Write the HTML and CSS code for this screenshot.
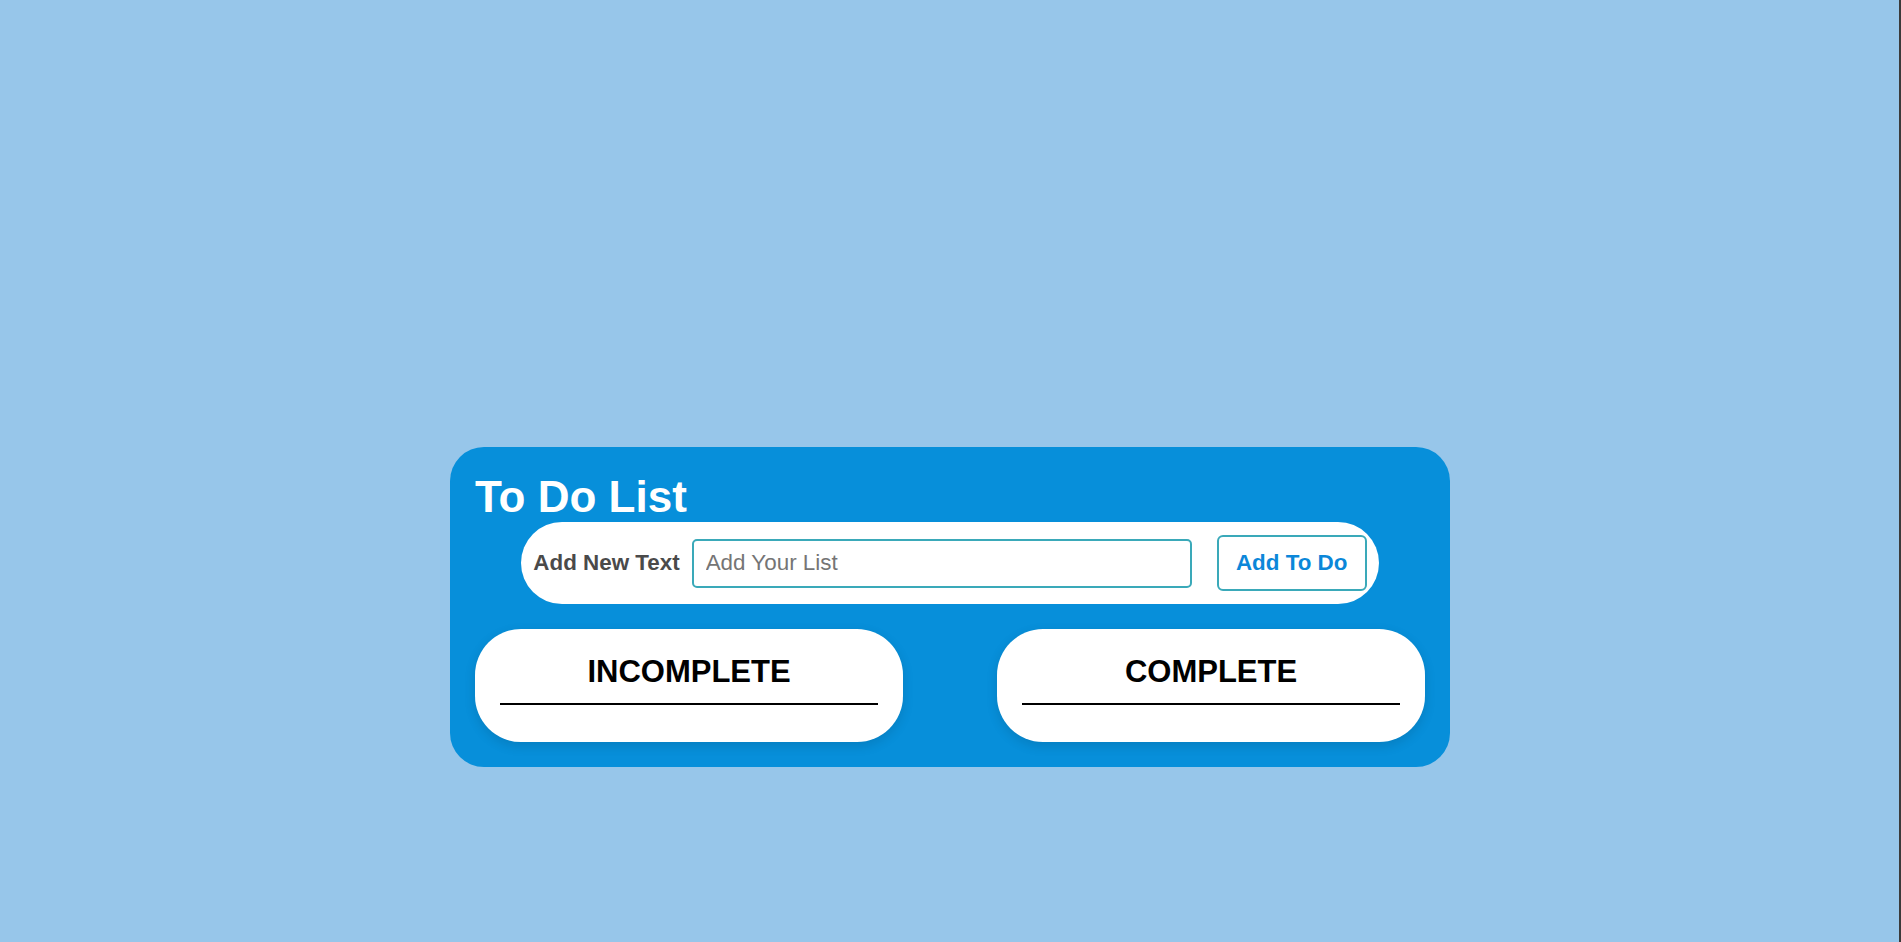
FILE: index.html
```html
<!DOCTYPE html>
<html lang="en">
<head>
<meta charset="utf-8">
<title>To Do List</title>
<link rel="stylesheet" href="styles.css">
</head>
<body>
  <main class="page">
    <section class="card">
      <h1 class="title">To Do List</h1>
      <div class="add-row">
        <label class="add-label" for="todo">Add New Text</label>
        <input class="add-input" id="todo" type="text" placeholder="Add Your List">
        <button class="add-btn" type="button">Add To Do</button>
      </div>
      <div class="lists">
        <div class="list-box">
          <h2 class="list-title">INCOMPLETE</h2>
          <ul class="list-items"></ul>
        </div>
        <div class="list-box">
          <h2 class="list-title">COMPLETE</h2>
          <ul class="list-items"></ul>
        </div>
      </div>
    </section>
  </main>
</body>
</html>
```

FILE: styles.css
```css
html, body {
  margin: 0;
  padding: 0;
}

body {
  background: #97c6ea;
  font-family: "Liberation Sans", Arial, sans-serif;
  min-height: 942px;
  box-sizing: border-box;
}

body::after {
  content: "";
  position: fixed;
  top: 0;
  right: 0;
  width: 2px;
  height: 100%;
  background: #3a3a3a;
}

.page {
  padding-top: 447px;
  display: flex;
  justify-content: center;
  padding-right: 1px;
}

.card {
  width: 1000px;
  box-sizing: border-box;
  background: #078fda;
  border-radius: 34px;
  padding: 25px;
  display: flex;
  flex-direction: column;
}

.title {
  margin: 0;
  color: #ffffff;
  font-size: 44px;
  font-weight: 700;
  line-height: normal;
}

.add-row {
  align-self: center;
  display: flex;
  align-items: center;
  background: #ffffff;
  height: 82px;
  border-radius: 41px;
  padding: 0 12px;
}

.add-label {
  font-size: 22.4px;
  font-weight: 700;
  color: #4a4a4a;
  margin-right: 12px;
}

.add-input {
  width: 500px;
  height: 49px;
  box-sizing: border-box;
  border: 2px solid #3aa9b9;
  border-radius: 5px;
  padding: 0 12px;
  font-family: "Liberation Sans", Arial, sans-serif;
  font-size: 22.4px;
  color: #333;
  outline: none;
  margin-right: 25px;
}

.add-input::placeholder {
  color: #757575;
}

.add-btn {
  width: 150px;
  height: 56px;
  box-sizing: border-box;
  border: 2px solid #3aa9b9;
  border-radius: 6px;
  background: #ffffff;
  color: #0b87d9;
  font-family: "Liberation Sans", Arial, sans-serif;
  font-size: 22.4px;
  font-weight: 700;
  padding: 0;
  cursor: pointer;
}

.lists {
  display: flex;
  justify-content: space-between;
  margin-top: 25px;
}

.list-box {
  width: 428px;
  box-sizing: border-box;
  background: #ffffff;
  border-radius: 46px;
  padding: 25px 25px 37px;
  box-shadow: 0 4px 12px rgba(0, 0, 0, 0.12);
}

.list-title {
  margin: 0;
  text-align: center;
  font-size: 31px;
  font-weight: 700;
  line-height: normal;
  color: #000000;
  padding-bottom: 13px;
  border-bottom: 2px solid #000000;
}

.list-items {
  margin: 0;
  padding: 0;
  list-style: none;
}
```
